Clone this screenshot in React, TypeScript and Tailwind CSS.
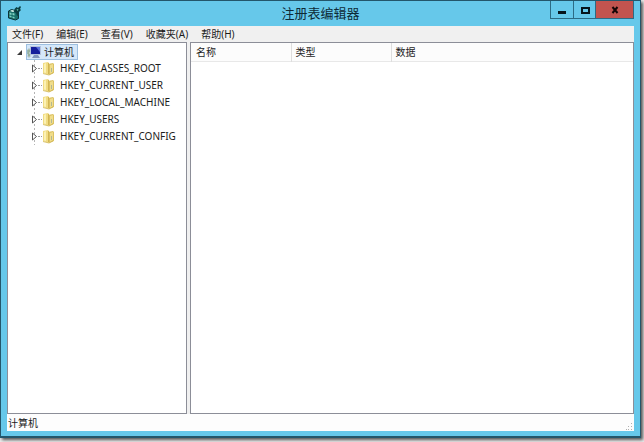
import React from 'react';

const menus = ['文件(F)', '编辑(E)', '查看(V)', '收藏夹(A)', '帮助(H)'];

const hives = [
  'HKEY_CLASSES_ROOT',
  'HKEY_CURRENT_USER',
  'HKEY_LOCAL_MACHINE',
  'HKEY_USERS',
  'HKEY_CURRENT_CONFIG',
];

const RegeditIcon = () => (
  <svg className="h-4 w-4" viewBox="0 0 16 16" aria-hidden="true">
    <path d="M1.500 6l3-1.500 7 2v7l-3 1.500-7-2z" fill="#17706a" stroke="#0b3438" strokeWidth="1" />
    <path d="M2.500 7.500l2 .5v2l-2-.5zM5.500 8l2 .5v2l-2-.5zM2.500 10.500l2 .5v1.500l-2-.5zM5.500 11.500l2 .5v1.500l-2-.5z" fill="#7fd0c0" />
    <path d="M3 6l2-1 3 1-2 1z" fill="#e4f7ee" />
    <path d="M7.500 4l2-2 1.500 1 2-2 1 1-1 2 1 1-2 2v3l-2 1-1-3-2-1z" fill="#0b3f42" />
    <path d="M9.500 4l2 .5-1 1.500z" fill="#71cdb9" />
  </svg>
);

const ComputerIcon = () => (
  <svg className="h-[14px] w-[14px] shrink-0" viewBox="0 0 14 14" aria-hidden="true">
    <path d="M1 4h2v8H1z" fill="#cdd9d2" stroke="#8b9d96" strokeWidth="0.500" />
    <path d="M0 6h3M0 8h2M1 10h2" stroke="#5d8a68" strokeWidth="0.800" />
    <rect x="3" y="1" width="11" height="9" fill="#b5c2dc" />
    <rect x="4" y="2" width="9" height="7" fill="#161f9c" />
    <path d="M9 2h4v5z" fill="#5a70dc" />
    <path d="M7 10h4l2 3H5z" fill="#8296bd" />
  </svg>
);

const FolderIcon = () => (
  <svg className="h-[15px] w-[13px] shrink-0" viewBox="0 0 13 15" aria-hidden="true">
    <path d="M6 3l5-1 1 1v9l-5 2z" fill="#dcc263" />
    <path d="M1 2l5-1 1 1v12l-6-2z" fill="#f1dc83" />
    <path d="M2 3l2-1v10l-2-.5z" fill="#fbf1b4" />
    <path d="M8 4l3-1v8l-3 2z" fill="#f0dd8c" />
    <path d="M6.500 2v11" stroke="#c9a945" strokeWidth="0.800" />
    <path d="M9 7h1v4H9z" fill="#b2b894" />
    <path d="M1 12.500l6 1.500 4-2" stroke="#cfb552" strokeWidth="0.800" fill="none" />
  </svg>
);

const WindowButtons = () => (
  <div className="absolute top-0 right-0 flex h-[18px] border border-t-0 border-[#2c6b85]">
    <button type="button" aria-label="最小化" className="flex w-[23px] items-center justify-center border-r border-[#2c6b85]">
      <svg className="h-3 w-3" viewBox="0 0 12 12">
        <path d="M2 7h8v3H2z" fill="#06151c" />
      </svg>
    </button>
    <button type="button" aria-label="最大化" className="flex w-[22px] items-center justify-center border-r border-[#2c6b85]">
      <svg className="h-3 w-3" viewBox="0 0 12 12">
        <path d="M3 4h7v5H3z" fill="none" stroke="#06151c" strokeWidth="2" />
      </svg>
    </button>
    <button type="button" aria-label="关闭" className="flex w-[37px] items-center justify-center bg-[#c2544f]">
      <svg className="h-3 w-3" viewBox="0 0 12 12">
        <path d="M3.500 3l5 6M8.500 3l-5 6" stroke="#160606" strokeWidth="2" />
      </svg>
    </button>
  </div>
);

const TitleBar = () => (
  <header className="relative flex h-[25px] justify-center pt-[2px]">
    <span className="absolute top-1 left-0">
      <RegeditIcon />
    </span>
    <h1 className="text-[13px] leading-5 text-[#0e2a36]">注册表编辑器</h1>
    <WindowButtons />
  </header>
);

const MenuBar = () => (
  <nav className="flex h-4 items-center gap-[13px] bg-[#f0f0f0] px-[5px]">
    {menus.map((menu) => (
      <button key={menu} type="button" className="leading-4">
        {menu}
      </button>
    ))}
  </nav>
);

const KeyTree = () => (
  <ul className="w-[180px] shrink-0 border border-[#8c8e98] bg-white pt-px">
    <li>
      <div className="flex h-4 items-center pl-2">
        <svg className="mr-[3px] h-[7px] w-[7px]" viewBox="0 0 7 7" aria-hidden="true">
          <path d="M6 1v5H1z" fill="#3a3a3a" />
        </svg>
        <button
          type="button"
          className="flex h-4 w-[52px] items-center gap-[3px] border border-[#9dbfe0] bg-[#d5e7f9] leading-[14px] whitespace-nowrap"
        >
          <ComputerIcon />
          计算机
        </button>
      </div>
      <ul className="ml-[26px] bg-[linear-gradient(#b5b5b5_50%,transparent_50%)] bg-[length:1px_4px] bg-repeat-y">
        {hives.map((hive) => (
          <li key={hive} className="-ml-[3px] flex h-[17px] items-center">
            <svg className="h-[9px] w-[7px] shrink-0" viewBox="0 0 7 9" aria-hidden="true">
              <path d="M1.500 1v7l4-3.500z" fill="#fff" stroke="#555" strokeWidth="1" />
            </svg>
            <span className="w-1 border-t border-dotted border-[#999]" />
            <button type="button" className="flex items-center gap-[5px] leading-[17px] whitespace-nowrap">
              <FolderIcon />
              {hive}
            </button>
          </li>
        ))}
      </ul>
    </li>
  </ul>
);

const ValueList = () => (
  <div className="flex-1 border border-[#8c8e98] bg-white">
    <table className="w-full table-fixed border-collapse">
      <thead>
        <tr className="h-[18px] border-b border-[#e8e8e8] bg-[#fcfcfc] text-left">
          <th className="w-[100px] border-r border-[#dedede] pl-[5px] font-normal">名称</th>
          <th className="w-[100px] border-r border-[#dedede] pl-1 font-normal">类型</th>
          <th className="pl-1 font-normal">数据</th>
        </tr>
      </thead>
    </table>
  </div>
);

const StatusBar = () => (
  <footer className="flex h-[17px] items-center justify-between bg-[#fdfdfd] pl-px">
    <span>计算机</span>
    <svg className="h-2 w-2 self-end" viewBox="0 0 8 8" aria-hidden="true">
      <path d="M5 0h1v1H5zM5 3h1v1H5zM2 3h1v1H2zM5 6h1v1H5zM2 6h1v1H2zM0 6h1v1H0z" fill="#b0b0b0" />
    </svg>
  </footer>
);

export default function App() {
  return (
    <div className="flex h-screen overflow-hidden bg-[#ececec] pr-[3px] pb-1 font-['Noto_Sans','Noto_Sans_CJK_SC',sans-serif] text-[10px] leading-4 text-[#1c1c1c]">
      <div className="flex flex-1 flex-col border border-b-2 border-[#23566b] bg-[#66c8ea] px-[6px] pb-[5px] shadow-[2px_2px_3px_#555]">
        <TitleBar />
        <MenuBar />
        <main className="flex flex-1 gap-[3px] bg-[#f0f0f0]">
          <KeyTree />
          <ValueList />
        </main>
        <StatusBar />
      </div>
    </div>
  );
}
